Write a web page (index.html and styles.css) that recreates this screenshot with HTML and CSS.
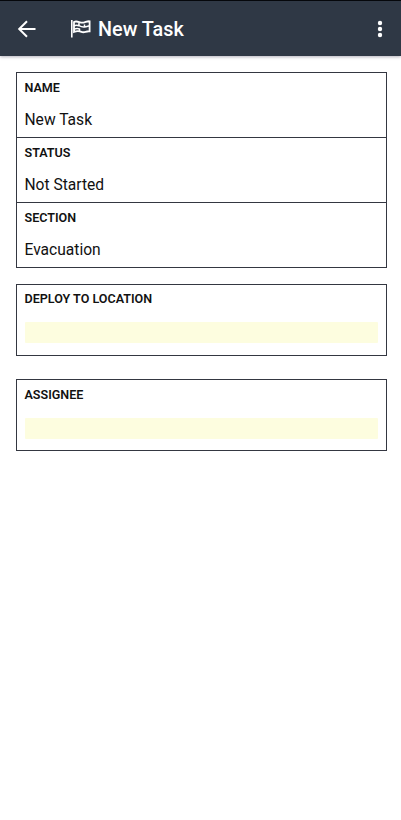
FILE: index.html
```html
<!DOCTYPE html>
<html lang="en">
<head>
<meta charset="utf-8">
<title>New Task</title>
<link rel="stylesheet" href="styles.css">
</head>
<body>
<header class="bar">
  <svg class="back" width="24" height="24" viewBox="0 0 24 24" fill="none" stroke="#fff" stroke-width="2"><path d="M20.500 12H4.800M12 4.200L4.200 12l7.800 7.800"/></svg>
  <svg class="flag" width="22" height="20" viewBox="0 0 22 20">
    <path d="M1.800 1v17.500" stroke="#fff" stroke-width="1.600" fill="none"/>
    <path d="M4 3C7.500 1.200 10 4.400 13.500 3.600C16 3 17.500 2 19.600 2.300V12.300C16 11.800 14.500 14.200 11.500 12.900C8.500 11.600 7 11.800 4 12.900Z" fill="none" stroke="#fff" stroke-width="1.800"/>
    <path d="M4 6.800C6 5.800 7.500 6 9 6.700M9 4V6.700C11 7.800 12.500 8.300 14.500 8V5.500M14.500 8C16.500 7.900 17.500 7.300 19.500 6.800M9.500 12.500V10C7.500 9.300 6 9.500 4 10.200" fill="none" stroke="#fff" stroke-width="1.500"/>
  </svg>
  <h1 class="title">New Task</h1>
  <svg class="more" width="24" height="24" viewBox="0 0 24 24" fill="#fff"><circle cx="12" cy="6" r="2.200"/><circle cx="12" cy="12" r="2.200"/><circle cx="12" cy="18" r="2.200"/></svg>
</header>
<main class="content">
  <section class="card details">
    <div class="field"><div class="label">NAME</div><div class="value">New Task</div></div>
    <div class="field"><div class="label">STATUS</div><div class="value">Not Started</div></div>
    <div class="field"><div class="label">SECTION</div><div class="value">Evacuation</div></div>
  </section>
  <section class="card entry location"><div class="label">DEPLOY TO LOCATION</div><div class="input"></div></section>
  <section class="card entry"><div class="label">ASSIGNEE</div><div class="input"></div></section>
</main>
</body>
</html>
```
FILE: styles.css
```css
* { box-sizing: border-box; }
body {
  margin: 0;
  min-height: 820px;
  background: #fff;
  color: #111;
  font-family: Roboto, sans-serif;
}
.bar {
  display: flex;
  align-items: center;
  height: 56px;
  padding: 1px 9px 0 15px;
  border-top: 1px solid #05070b;
  background: #2f3845;
  box-shadow: 0 1px 3px rgba(40, 35, 60, .35);
}
.flag { margin-left: 31px; }
.title {
  flex: 1;
  margin: 0 0 0 6px;
  padding-top: 2px;
  color: #fff;
  font-size: 19.8px;
  font-weight: 500;
  line-height: 24px;
}
.content { padding: 16px 14px 0 16px; }
.card { border: 1px solid #343741; }
.details { margin-bottom: 16px; }
.field { height: 65px; padding: 7px 7.5px 0; }
.field:not(:last-child) { border-bottom: 1px solid #343741; }
.field:last-child { height: 64px; }
.label {
  font-size: 12.55px;
  font-weight: 600;
  line-height: 15px;
}
.value {
  margin-top: 15px;
  font-size: 15.6px;
  line-height: 20px;
}
.entry { height: 72px; padding: 7px 8px 0 7.5px; }
.location { padding-top: 6px; margin-bottom: 23px; }
.input {
  height: 21px;
  margin-top: 16px;
  border-radius: 1px;
  background: #fdfddf;
}
```
